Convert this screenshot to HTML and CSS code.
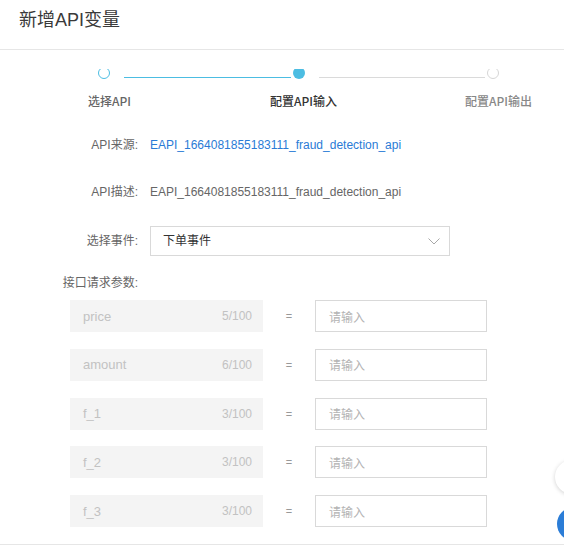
FILE: index.html
```html
<!DOCTYPE html>
<html lang="zh-CN">
<head>
<meta charset="utf-8">
<title>新增API变量</title>
<link rel="stylesheet" href="styles.css">
</head>
<body>
<div class="modal">
  <header class="head"><h1 class="title">新增API变量</h1></header>
  <div class="body">
    <div class="steps">
      <div class="track">
        <span class="dot-wrap"><span class="dot dot-done"></span></span>
        <span class="line line-done"></span>
        <span class="dot-wrap gap-left"><span class="dot dot-active"></span></span>
        <span class="line line-wait"></span>
        <span class="dot-wrap gap-left"><span class="dot dot-wait"></span></span>
      </div>
      <div class="labels">
        <span class="step-label done">选择API</span>
        <span class="step-label active">配置API输入</span>
        <span class="step-label wait">配置API输出</span>
      </div>
    </div>
    <div class="form">
      <div class="row row-source">
        <span class="label">API来源:</span>
        <span class="value link">EAPI_1664081855183111_fraud_detection_api</span>
      </div>
      <div class="row row-desc">
        <span class="label">API描述:</span>
        <span class="value">EAPI_1664081855183111_fraud_detection_api</span>
      </div>
      <div class="row row-select">
        <span class="label">选择事件:</span>
        <div class="select">
          <span class="select-text">下单事件</span>
          <svg class="chev" width="12" height="7" viewBox="0 0 12 7"><path d="M0.5 0.5 L6 6 L11.5 0.5" fill="none" stroke="#a8a8a8" stroke-width="1"/></svg>
        </div>
      </div>
      <div class="row row-params">
        <span class="label">接口请求参数:</span>
      </div>
      <div class="params">
        <div class="param">
          <div class="param-key"><span>price</span><span>5/100</span></div>
          <span class="eq">=</span>
          <div class="param-input">请输入</div>
        </div>
        <div class="param">
          <div class="param-key"><span>amount</span><span>6/100</span></div>
          <span class="eq">=</span>
          <div class="param-input">请输入</div>
        </div>
        <div class="param">
          <div class="param-key"><span>f_1</span><span>3/100</span></div>
          <span class="eq">=</span>
          <div class="param-input">请输入</div>
        </div>
        <div class="param">
          <div class="param-key"><span>f_2</span><span>3/100</span></div>
          <span class="eq">=</span>
          <div class="param-input">请输入</div>
        </div>
        <div class="param">
          <div class="param-key"><span>f_3</span><span>3/100</span></div>
          <span class="eq">=</span>
          <div class="param-input">请输入</div>
        </div>
      </div>
    </div>
  </div>
</div>
<div class="fab fab-white"></div>
<div class="fab fab-blue"></div>
</body>
</html>
```

FILE: styles.css
```css
* { box-sizing: border-box; }
html, body { margin: 0; padding: 0; background: #fff; }
body {
  font-family: "Liberation Sans", "Noto Sans CJK SC", sans-serif;
  font-size: 12px;
  color: #333;
  overflow: hidden;
}
.modal { width: 564px; }
.head {
  height: 50px;
  border-bottom: 1px solid #e6e6e6;
  padding-left: 19px;
}
.title {
  margin: 0;
  font-size: 18px;
  font-weight: normal;
  line-height: 40px;
  color: #3a3a3a;
}
.body {
  height: 495px;
  border-bottom: 1px solid #e6e6e6;
  overflow: hidden;
}
.steps { padding-top: 19px; }
.track {
  display: flex;
  align-items: flex-end;
  height: 10px;
  padding-left: 98px;
}
.dot-wrap {
  width: 12px;
  height: 10px;
  overflow: hidden;
  display: flex;
  align-items: flex-end;
  flex: none;
}
.gap-left { margin-left: 2px; }
.dot {
  width: 12px;
  height: 12px;
  border-radius: 50%;
  flex: none;
}
.dot-done { border: 1.5px solid #4cbde2; }
.dot-active { background: #4cbde2; }
.dot-wait { border: 1px solid #d6d6d6; }
.line { height: 0; margin-bottom: 1px; flex: none; }
.line-done { width: 167px; margin-left: 14px; border-top: 1px solid #4cbde2; }
.line-wait { width: 166px; margin-left: 14px; border-top: 1px solid #dadada; }
.labels {
  display: grid;
  grid-template-columns: 182px 195px auto;
  padding-left: 88px;
  margin-top: 14px;
  line-height: 16px;
  font-family: "Noto Sans CJK SC", sans-serif;
  font-size: 12px;
  font-weight: 500;
}
.done { color: #666; }
.active { color: #333; }
.wait { color: #888; }
.form { margin-top: 28px; }
.row {
  display: grid;
  grid-template-columns: 138px 1fr;
  column-gap: 12px;
  align-items: center;
  line-height: 16px;
}
.label { text-align: right; color: #666; white-space: nowrap; }
.value { color: #666; }
.link { color: #2a7bd6; }
.row-desc { margin-top: 31px; }
.row-select { margin-top: 26px; }
.select {
  width: 300px;
  height: 30px;
  border: 1px solid #d9d9d9;
  display: flex;
  align-items: center;
  justify-content: space-between;
  padding: 0 9px 0 12px;
  color: #333;
}
.row-params { margin-top: 19px; }
.params {
  margin-top: 9px;
  padding-left: 70px;
  display: flex;
  flex-direction: column;
  gap: 16.75px;
}
.param { display: flex; align-items: center; }
.param-key {
  width: 193px;
  height: 32px;
  background: #f4f4f4;
  display: flex;
  align-items: center;
  justify-content: space-between;
  padding: 0 11px 0 13px;
  color: #c2c2c2;
}
.param-key span:first-child { font-size: 13px; }
.eq {
  width: 52px;
  text-align: center;
  color: #999;
  font-size: 11px;
}
.param-input {
  width: 172px;
  height: 32px;
  border: 1px solid #d9d9d9;
  display: flex;
  align-items: center;
  padding-left: 13px;
  color: #b3b3b3;
}
.fab {
  position: fixed;
  width: 34px;
  height: 34px;
  border-radius: 50%;
}
.fab-white {
  left: 555px;
  top: 460px;
  background: #fff;
  box-shadow: 0 1px 4px rgba(0,0,0,0.18);
}
.fab-blue {
  left: 557px;
  top: 507px;
  background: #2b7dd7;
}
```
